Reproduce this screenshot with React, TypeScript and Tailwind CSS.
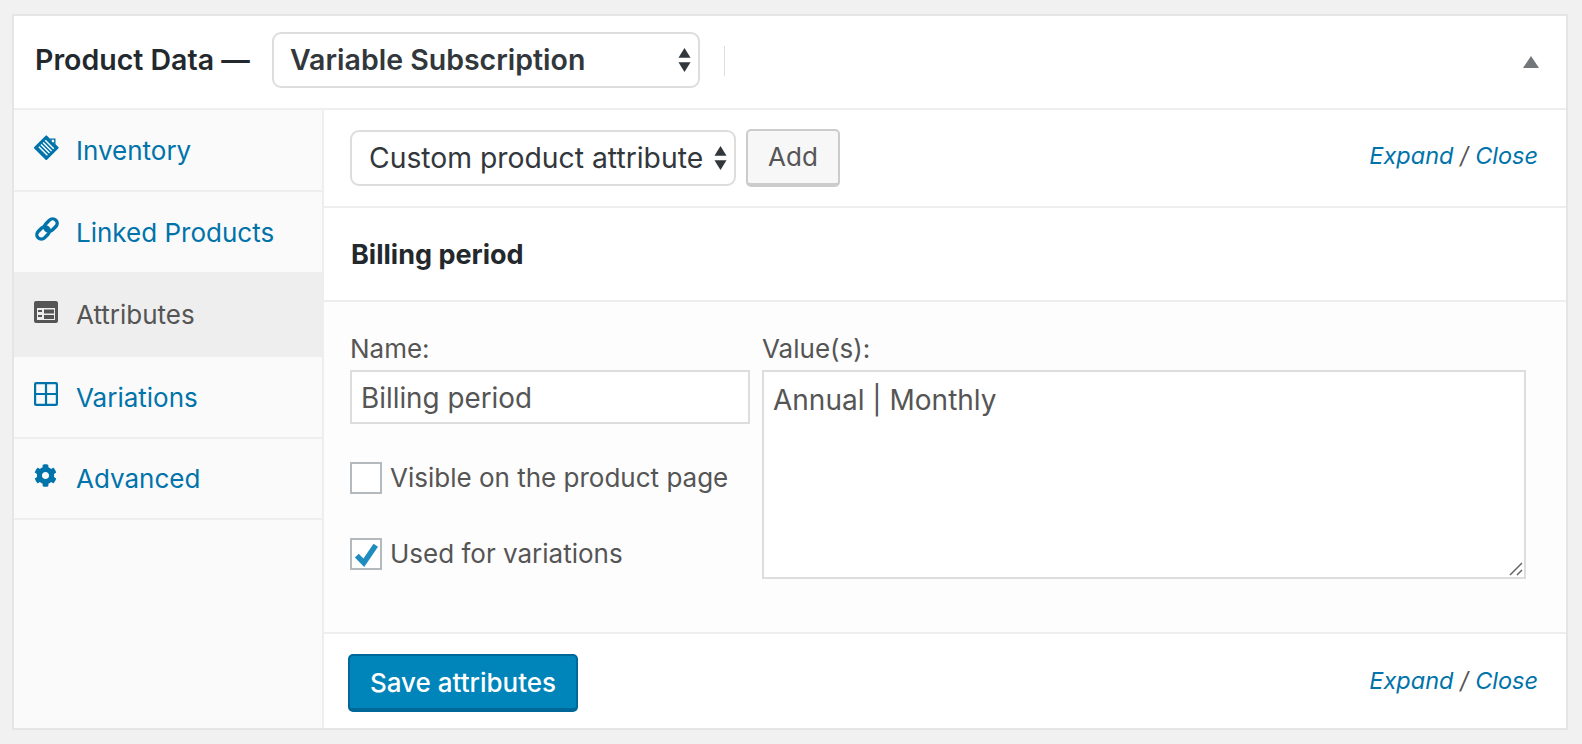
import { FaCog } from 'react-icons/fa';

const font = "font-['Inter','Noto_Sans',sans-serif]";

function SelectArrows({ className }: { className: string }) {
    return (
        <svg viewBox="0 0 14 26" className={className} fill="#32373c">
            <path d="M7 0 L13.5 10.5 H0.5 Z" />
            <path d="M7 26 L13.5 15.5 H0.5 Z" />
        </svg>
    );
}

function InventoryIcon() {
    return (
        <svg viewBox="0 0 26 26" className="w-[26px] h-[26px]">
            <g transform="rotate(45 13 13)">
                <rect x="4" y="5" width="18" height="18" rx="1" fill="#0073aa" />
                <path d="M9 5 L13 1 L17 5 Z" fill="#0073aa" />
                <circle cx="13" cy="4.5" r="1.3" fill="#fff" />
                <path d="M7 9.5h12M7 12.5h12M7 15.5h12M7 18.5h12" stroke="#fff" strokeWidth="1.4" />
            </g>
        </svg>
    );
}

function LinkIcon() {
    return (
        <svg viewBox="0 0 26 26" className="w-[26px] h-[26px]" fill="none" stroke="#0073aa" strokeWidth="3.4">
            <g transform="rotate(-45 13 13)">
                <rect x="0.5" y="8.5" width="14" height="9" rx="4.5" />
                <rect x="11.5" y="8.5" width="14" height="9" rx="4.5" />
            </g>
        </svg>
    );
}

function AttributesIcon() {
    return (
        <svg viewBox="0 0 24 22" className="w-[24px] h-[22px]">
            <rect x="0" y="0" width="24" height="22" rx="2" fill="#555" />
            <rect x="3" y="7" width="18" height="12" fill="#eee" />
            <path d="M4 10h4M4 15h4" stroke="#555" strokeWidth="2" />
            <path d="M10 8.5h10v4H10zM10 14h10v4H10z" fill="#555" />
        </svg>
    );
}

function VariationsIcon() {
    return (
        <svg viewBox="0 0 24 24" className="w-[24px] h-[24px]" fill="none" stroke="#0073aa" strokeWidth="2.2">
            <rect x="1.1" y="1.1" width="21.8" height="21.8" rx="1" />
            <path d="M12 1v22M1 12h22" />
        </svg>
    );
}

const tabs = [
    { label: 'Inventory', icon: <InventoryIcon />, h: 'h-[82px]' },
    { label: 'Linked Products', icon: <LinkIcon />, h: 'h-[82px]' },
    { label: 'Attributes', icon: <AttributesIcon />, h: 'h-[83px]', active: true },
    { label: 'Variations', icon: <VariationsIcon />, h: 'h-[82px]' },
    { label: 'Advanced', icon: <FaCog className="w-[23px] h-[23px] text-[#0073aa]" />, h: 'h-[81px]' },
];

function ExpandClose({ className }: { className?: string }) {
    return (
        <div className={`text-[23.5px] italic text-[#555] ${className ?? ''}`}>
            <a className="text-[#0073aa]">Expand</a> / <a className="text-[#0073aa]">Close</a>
        </div>
    );
}

export default function App() {
    return (
        <div className={`${font} w-[1582px] h-[744px] bg-[#f1f1f1] pl-[12px] pt-[14px] overflow-hidden`}>
            <div className="w-[1556px] h-[716px] border-2 border-[#e5e5e5] bg-white flex flex-col">
                {/* Header */}
                <div className="h-[94px] shrink-0 border-b-2 border-[#eee] pl-[21px] pr-[27px] flex items-center">
                    <h2 className="text-[28.5px] font-semibold text-[#23282d] w-[237px] shrink-0 mt-[-4px]">Product Data —</h2>
                    <div className="relative w-[428px] h-[56px] mt-[-4px]">
                        <select className="appearance-none w-full h-full border-2 border-[#ddd] rounded-[9px] bg-white pl-[16px] text-[28.5px] font-semibold text-[#32373c] outline-none">
                            <option>Variable Subscription</option>
                        </select>
                        <SelectArrows className="absolute right-[9px] top-[15px] w-[13px] h-[26px]" />
                    </div>
                    <div className="w-[1px] h-[30px] bg-[#ddd] ml-[24px] mt-[-2px]" />
                    <svg viewBox="0 0 16 12" className="w-[16px] h-[12px] ml-auto" fill="#72777c">
                        <path d="M8 0 L16 12 H0 Z" />
                    </svg>
                </div>

                <div className="flex flex-1 min-h-0">
                    {/* Sidebar */}
                    <div className="w-[310px] shrink-0 bg-[#fafafa] border-r-2 border-[#eee]">
                        {tabs.map(tab => (
                            <div
                                key={tab.label}
                                className={`${tab.h} flex items-center pl-[20px] border-b-2 text-[26px] ${tab.active ? 'bg-[#eee] border-[#eee] text-[#555]' : 'border-[#eee] text-[#0073aa]'}`}
                            >
                                <span className="w-[42px] h-[26px] shrink-0 flex items-center mt-[-6px]">{tab.icon}</span>
                                <span>{tab.label}</span>
                            </div>
                        ))}
                    </div>

                    {/* Content */}
                    <div className="flex-1 min-w-0 flex flex-col">
                        <div className="h-[98px] shrink-0 border-b-2 border-[#eee] pl-[26px] pr-[28px] flex items-center justify-between">
                            <div className="flex items-center gap-[10px]">
                                <div className="relative w-[386px] h-[56px]">
                                    <select className="appearance-none w-full h-full border-2 border-[#ddd] rounded-[9px] bg-white pl-[17px] text-[28.3px] text-[#32373c] outline-none">
                                        <option>Custom product attribute</option>
                                    </select>
                                    <SelectArrows className="absolute right-[9px] top-[15px] w-[13px] h-[26px]" />
                                </div>
                                <button className="w-[94px] h-[58px] mt-[-1px] border-2 border-b-[4px] border-[#ccc] rounded-[5px] bg-[#f7f7f7] text-[26px] text-[#555]">Add</button>
                            </div>
                            <ExpandClose className="mt-[-4px]" />
                        </div>

                        <div className="h-[94px] shrink-0 border-b-2 border-[#eee] pl-[27px] pt-[2px] flex items-center">
                            <strong className="text-[27px] font-bold text-[#23282d]">Billing period</strong>
                        </div>

                        <div className="h-[332px] shrink-0 bg-[#fdfdfd] border-b-2 border-[#eee] pl-[26px] pt-[30px] flex gap-[12px]">
                            <div className="w-[400px] shrink-0">
                                <label className="block text-[26px] leading-[34px] h-[38px] text-[#555]">Name:</label>
                                <input
                                    readOnly
                                    value="Billing period"
                                    className="block w-full h-[54px] border-2 border-[#ddd] bg-white pl-[9px] pt-[2px] text-[27.8px] text-[#555] outline-none"
                                />
                                <label className="flex items-center gap-[8px] mt-[34px] text-[26px] text-[#555]">
                                    <span className="w-[32px] h-[32px] border-2 border-[#b4b9be] bg-white shrink-0" />
                                    Visible on the product page
                                </label>
                                <label className="flex items-center gap-[8px] mt-[37px] text-[26px] text-[#555]">
                                    <span className="w-[32px] h-[32px] border-2 border-[#b4b9be] bg-white shrink-0 flex items-center justify-center">
                                        <svg viewBox="0 0 24 24" className="w-[26px] h-[26px]" fill="none" stroke="#1e8cbe" strokeWidth="5">
                                            <path d="M3.5 13.5 L10 20 L21 4" />
                                        </svg>
                                    </span>
                                    Used for variations
                                </label>
                            </div>
                            <div className="w-[764px] shrink-0">
                                <label className="block text-[26px] leading-[34px] h-[38px] text-[#555]">Value(s):</label>
                                <div className="relative">
                                    <textarea
                                        readOnly
                                        value="Annual | Monthly"
                                        className="block w-full h-[209px] resize-none border-2 border-[#ddd] bg-white px-[9px] py-[10px] text-[28px] leading-[36px] text-[#555] outline-none"
                                    />
                                    <svg viewBox="0 0 14 14" className="absolute right-[3px] bottom-[3px] w-[14px] h-[14px]" stroke="#666" strokeWidth="1.5">
                                        <path d="M1 13 L13 1M8 13 L13 8" />
                                    </svg>
                                </div>
                            </div>
                        </div>

                        <div className="flex-1 pl-[24px] pr-[28px] flex items-center justify-between">
                            <button className="w-[230px] h-[58px] mt-[4px] bg-[#0085ba] border-2 border-[#006799] border-b-[4px] rounded-[5px] text-[26px] font-medium text-white">Save attributes</button>
                            <ExpandClose />
                        </div>
                    </div>
                </div>
            </div>
        </div>
    );
}
